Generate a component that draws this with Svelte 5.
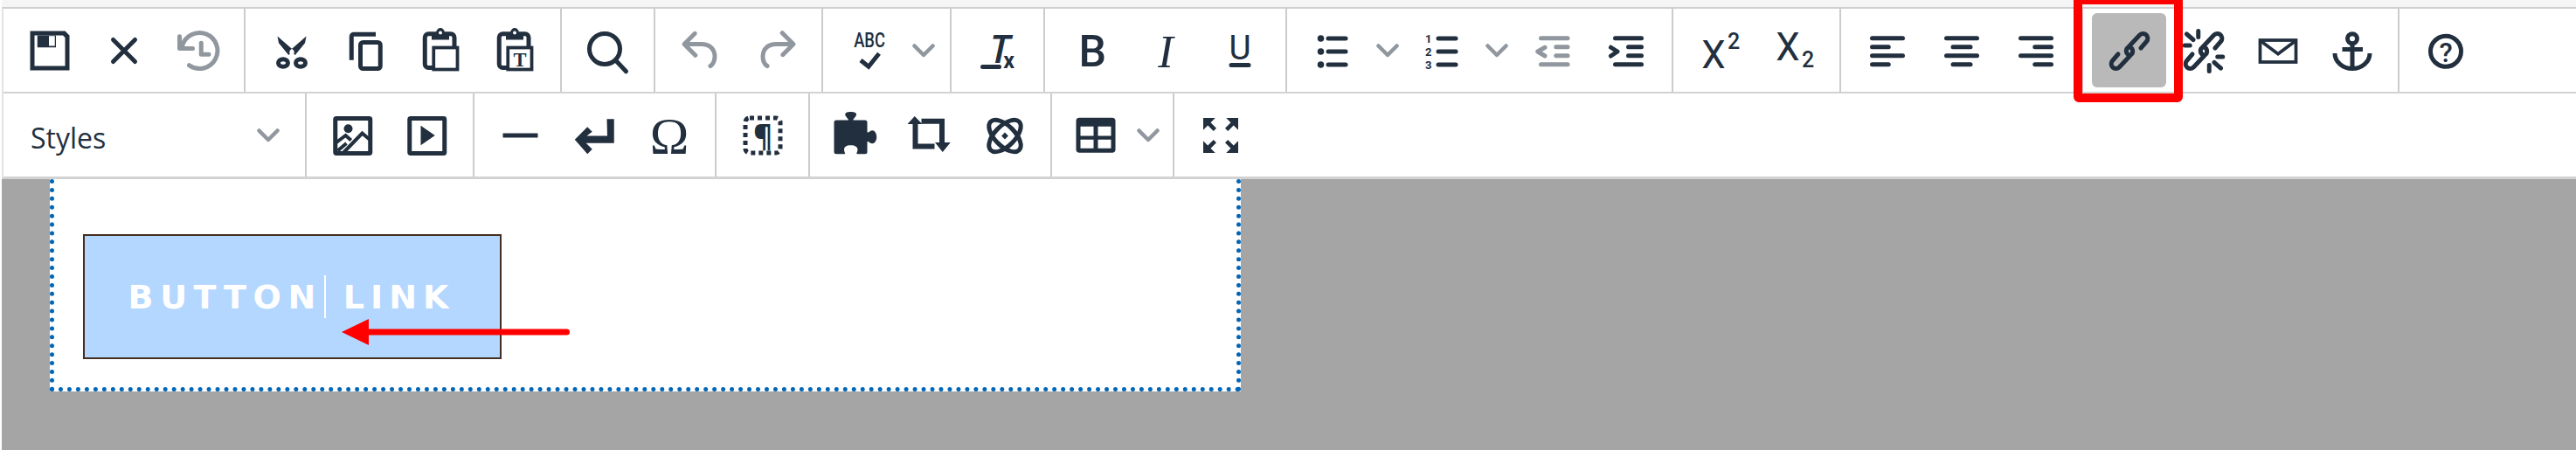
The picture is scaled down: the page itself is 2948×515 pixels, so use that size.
<script>
  const S = 'fill="none" stroke="currentColor" stroke-width="2"';
  const R = S + ' stroke-linecap="round" stroke-linejoin="round"';
  const F = 'fill="currentColor"';
  const T = F + ' font-family="Roboto, sans-serif" text-anchor="middle"';
  const linkPath = 'M17.2 10.800L19.800 7.800A2.100 2.100 0 0 0 16.600 4.900L10.700 11.200Q10 12.900 11.900 14.300';
  const chain = `<path ${R} d="${linkPath}"/><path ${R} transform="rotate(180 12 12.200)" d="${linkPath}"/>`;
  const clip = `<rect x="4.9" y="4.3" width="13.5" height="15.5" rx="1.6" ${S}/><path ${F} d="M8 3.6h2c.2-1.2 1-2 2-2s1.800.8 2 2h2V7H8z"/><circle cx="12" cy="3.8" r=".8" fill="#fff"/><rect x="8.900" y="10.600" width="10.900" height="10" fill="#fff" stroke="currentColor" stroke-width="1.500"/>`;
  const line = (x1, x2, y) => `<path ${R} d="M${x1} ${y}H${x2}"/>`;
  const corner = `<path ${F} d="M4 4h5.500L7.400 6.100 10 8.700 8.700 10 6.100 7.400 4 9.500z"/>`;

  const icons = {
    save: `<path ${F} fill-rule="evenodd" d="M3 3h16l2 2v16H3zM5 5v14h14V6l-1-1z"/><path ${F} d="M6.300 5h8.500v5.500H6.300z"/><path fill="#fff" d="M11.600 5.300h2.700v4.500h-2.700z"/>`,
    close: `<path ${R} stroke-width="2.200" d="M7 7l10 10M17 7L7 17"/>`,
    history: `<path ${R} d="M3.400 5.500V11h6"/><path ${R} d="M4.600 10A8.200 8.200 0 1 1 7.800 18.700"/><path ${R} d="M13.300 8.500v5.200h3.500"/>`,
    cut: `<path ${F} d="M5.400 5.400L6 8.500l4.500 5.500L13 12zM18.600 5.400L18 8.500 13.500 14 11 12z"/><circle cx="12" cy="12.800" r="1.100" fill="#fff"/><ellipse cx="8" cy="17.600" rx="2.200" ry="1.700" ${S} stroke-width="1.700"/><ellipse cx="16" cy="17.600" rx="2.200" ry="1.700" ${S} stroke-width="1.700"/>`,
    copy: `<path ${S} d="M5.300 16.300V5.500a1 1 0 0 1 1-1h10.100"/><rect x="9.400" y="8.200" width="9.100" height="12" rx="1.200" ${S}/>`,
    paste: clip,
    pastetext: clip + `<text x="14.400" y="19" font-family="Liberation Serif, serif" font-weight="700" font-size="9" text-anchor="middle" ${F}>T</text>`,
    search: `<circle cx="10.400" cy="11.200" r="7" ${S}/><path ${R} d="M15.500 16.500l4.700 5"/>`,
    undo: `<path ${F} d="M6.400 8H12c3.700 0 6.200 2 6.800 5.100.6 2.700-.4 5.600-2.300 6.800a1 1 0 0 1-1-1.800c1.100-.6 1.800-2.700 1.400-4.600-.5-2.100-2.100-3.500-4.900-3.500H6.400l3.300 3.300a1 1 0 1 1-1.400 1.400l-5-5a1 1 0 0 1 0-1.400l5-5a1 1 0 0 1 1.400 1.400L6.400 8z"/>`,
    redo: `<path ${F} d="M17.600 10H12c-2.800 0-4.400 1.400-4.900 3.500-.4 2 .3 4 1.400 4.600a1 1 0 1 1-1 1.800c-2-1.200-2.900-4.100-2.300-6.800.6-3 3-5.100 6.800-5.100h5.600l-3.300-3.300a1 1 0 1 1 1.400-1.400l5 5a1 1 0 0 1 0 1.400l-5 5a1 1 0 0 1-1.400-1.400l3.300-3.300z"/>`,
    spell: `<text x="12" y="10.500" textLength="14.300" lengthAdjust="spacingAndGlyphs" font-size="9.500" font-weight="500" ${T}>ABC</text><path ${S} d="M8 16.400l3.600 2.900 4.800-6"/>`,
    clear: `<text x="12.800" y="17.600" font-family="Open Sans, sans-serif" font-style="italic" font-weight="600" font-size="18" text-anchor="middle" ${F}>T</text><rect x="4" y="18.400" width="9.600" height="2" rx="1" ${F}/><text x="17" y="20" font-size="10" font-weight="700" ${T}>x</text>`,
    bold: `<text x="12.500" y="19" font-size="20" font-weight="500" ${T}>B</text>`,
    italic: `<text x="12" y="19.500" font-family="Liberation Serif, serif" font-style="italic" font-size="21" text-anchor="middle" ${F}>I</text>`,
    underline: `<text x="12" y="16" font-size="15.500" ${T}>U</text><rect x="7" y="17.600" width="10" height="2" rx="1" ${F}/>`,
    bullist: [6.4, 12.4, 18.4].map((y) => `<circle cx="6.200" cy="${y}" r="1.500" ${F}/>` + line(9.6, 17.6, y)).join(''),
    numlist: ['1', '2', '3'].map((n, i) => `<text x="5.500" y="${8.2 + i * 6}" font-size="5.200" font-weight="700" ${T}>${n}</text>` + line(10, 18, 6.4 + i * 6)).join(''),
    outdent: line(7, 19.200, 6.300) + line(13.900, 19.200, 10.300) + line(13.900, 19.200, 14.300) + line(7, 19.200, 18.300) + `<path ${R} d="M8.800 10.500L5.500 12.400l3.300 2"/>`,
    indent: line(7, 19, 6.300) + line(13, 19, 10.300) + line(13, 19, 14.300) + line(7, 19, 18.300) + `<path ${R} d="M5 10.500l3 1.900-3 2"/>`,
    sup: `<text x="9.200" y="20" font-size="17.500" ${T}>X</text><text x="18.400" y="11" font-size="10" font-weight="500" ${T}>2</text>`,
    sub: `<text x="9.200" y="16.400" font-size="17.500" ${T}>X</text><text x="18.400" y="19.600" font-size="10" font-weight="500" ${T}>2</text>`,
    alignleft: line(5, 19, 6.300) + line(5, 12.500, 10.300) + line(5, 19, 14.300) + line(5, 12.500, 18.300),
    aligncenter: line(5, 19, 6.300) + line(8, 16, 10.300) + line(5, 19, 14.300) + line(8, 16, 18.300),
    alignright: line(5, 19, 6.300) + line(11.500, 19, 10.300) + line(5, 19, 14.300) + line(11.500, 19, 18.300),
    link: chain,
    unlink: chain + `<path ${R} stroke-width="1.600" d="M4.200 4.400l3 2.600M9.500 3v2.800M3.300 9.600h2.400M19.800 20l-3-2.600M14.500 21.400v-2.800M20.700 14.800h-2.400"/>`,
    mail: `<rect x="3.800" y="7.200" width="16.400" height="10" fill="none" stroke="currentColor" stroke-width="1.500"/><path fill="none" stroke="currentColor" stroke-width="1.500" d="M4 7.500l8 6 8-6"/>`,
    anchor: `<circle cx="12" cy="6.500" r="2.200" ${S}/><path ${S} d="M12 9v11M7.400 11.400h9.400M4 13.200A8 7 0 0 0 20 13.200"/>`,
    help: `<circle cx="12" cy="12.300" r="7" ${S}/><text x="12" y="17.100" font-size="12.500" font-weight="500" ${T}>?</text>`,
    image: `<rect x="3.900" y="4.200" width="16" height="16" rx=".5" ${S}/><circle cx="9.800" cy="8.900" r="2" ${F}/><path fill="none" stroke="currentColor" stroke-width="1.600" d="M4 15.500L8.600 12l2.500 2.200M7.500 20l8.700-9 3.800 3.200M5 19l4-3.400"/>`,
    media: `<rect x="3.900" y="4.200" width="16" height="16" rx=".5" ${S}/><path ${F} d="M9 7.500l6.500 4.500L9 16.500z"/>`,
    hr: `<path ${F} d="M3.800 11h16v2h-16z"/>`,
    nbsp: `<path ${F} d="M17.400 4.500h3.300v11H7.900l2.800 2.800-2.200 2.200-5.800-6.600 5.800-5.800 2.200 2.200-2.500 1.900h9.400z"/>`,
    omega: `<text x="12" y="20.500" font-family="Liberation Serif, serif" font-size="24" text-anchor="middle" ${F}>Ω</text>`,
    blocks: `<rect x="4" y="4" width="16" height="16" rx="2" ${S} stroke-dasharray="2 1.600"/><text x="12" y="17" font-family="Open Sans, sans-serif" font-weight="700" font-size="13.500" text-anchor="middle" ${F}>¶</text>`,
    puzzle: `<path ${F} d="M2.800 5h5.500c.3-.7-1.400-1.500-1.400-2.600C6.900 1.500 8 1.200 9.400 1.200s2.600.3 2.600 1.200c0 1.100-1.600 1.900-1.400 2.600H16a1 1 0 0 1 1 1v4.600c.7.2 1.300-.9 2.400-.9.900 0 1.900 1.200 1.900 3s-1 3-1.900 3c-1.100 0-1.700-1.100-2.400-.9v4.700a1 1 0 0 1-1 1h-3.800c-.2-.7.400-1 .4-2 0-1.200-1.200-2-3.200-2s-3 .8-3 2c0 1 .5 1.300.4 2H2.800a1 1 0 0 1-1-1V6a1 1 0 0 1 1-1z"/>`,
    crop: `<path fill="none" stroke="currentColor" stroke-width="2.400" d="M5 6v11h8.800M7.800 5.500H17.200v10"/><path ${F} d="M4.700 3.200l3.500 3.600H1.400zM17.500 19.600L14 15.200h7.100z"/>`,
    atom: `<ellipse cx="12" cy="12.200" rx="9.200" ry="4.600" transform="rotate(45 12 12.200)" ${S}/><ellipse cx="12" cy="12.200" rx="9.200" ry="4.600" transform="rotate(-45 12 12.200)" ${S}/><rect x="10.900" y="11.100" width="2.200" height="2.200" transform="rotate(45 12 12.200)" ${F}/>`,
    table: `<path ${F} fill-rule="evenodd" d="M4.500 3.900h15A1.500 1.500 0 0 1 21 5.400v13a1.500 1.500 0 0 1-1.500 1.500h-15A1.500 1.500 0 0 1 3 18.400v-13a1.500 1.500 0 0 1 1.500-1.500zM5 7.900v4.300h6V7.900zM13 7.900v4.300h6V7.900zM5 13.900v4h6v-4zM13 13.900v4h6v-4z"/>`,
    full: corner + `<g transform="rotate(90 12 12)">${corner}</g><g transform="rotate(180 12 12)">${corner}</g><g transform="rotate(270 12 12)">${corner}</g>`
  };

  const off = true;
  const row1 = [
    [{ i: 'save' }, { i: 'close' }, { i: 'history', off }],
    [{ i: 'cut' }, { i: 'copy' }, { i: 'paste' }, { i: 'pastetext' }],
    [{ i: 'search' }],
    [{ i: 'undo', off }, { i: 'redo', off }],
    [{ i: 'spell', drop: true }],
    [{ i: 'clear' }],
    [{ i: 'bold' }, { i: 'italic' }, { i: 'underline' }],
    [{ i: 'bullist', drop: true }, { i: 'numlist', drop: true }, { i: 'outdent', off }, { i: 'indent' }],
    [{ i: 'sup' }, { i: 'sub' }],
    [{ i: 'alignleft' }, { i: 'aligncenter' }, { i: 'alignright' }],
    [{ i: 'link', active: true }, { i: 'unlink' }, { i: 'mail' }, { i: 'anchor' }],
    [{ i: 'help' }]
  ];
  const row2 = [
    [{ i: 'image' }, { i: 'media' }],
    [{ i: 'hr' }, { i: 'nbsp' }, { i: 'omega' }],
    [{ i: 'blocks' }],
    [{ i: 'puzzle' }, { i: 'crop' }, { i: 'atom' }],
    [{ i: 'table', drop: true, tight: true }],
    [{ i: 'full' }]
  ];
</script>

{#snippet chevron()}
  <svg class="chev" viewBox="0 0 26 16" width="26" height="16" aria-hidden="true">
    <path d="M2.500 2.500L13 13 23.500 2.500" fill="none" stroke="currentColor" stroke-width="4.500" stroke-linecap="round" stroke-linejoin="round" />
  </svg>
{/snippet}

{#snippet group(items)}
  <div class="group" class:tight={items[0].tight}>
    {#each items as b}
      <button class="btn" class:off={b.off} class:active={b.active} type="button">
        <svg viewBox="0 0 24 24" width="60" height="60" aria-hidden="true">{@html icons[b.i]}</svg>
      </button>
      {#if b.drop}
        <button class="caret" class:narrow={b.tight} type="button">{@render chevron()}</button>
      {/if}
    {/each}
  </div>
{/snippet}

<div class="page">
  <div class="topstrip"></div>
  <header class="toolbar">
    <div class="row">
      {#each row1 as items}{@render group(items)}{/each}
    </div>
    <div class="row second">
      <div class="select">
        <span class="label">Styles</span>
        {@render chevron()}
      </div>
      {#each row2 as items}{@render group(items)}{/each}
    </div>
  </header>

  <main class="stage">
    <section class="sheet">
      <a class="cta" href="#link">
        <span class="word">BUTTON</span>
        <span class="bar"></span>
        <span class="word last">LINK</span>
      </a>
    </section>
  </main>

  <div class="frame"></div>
  <svg class="arrow" viewBox="0 0 262 32" width="262" height="32" aria-hidden="true">
    <path d="M0 16L31 1v11.500h226.500a3.500 3.500 0 0 1 0 7H31V31z" fill="#ff0000" />
  </svg>
</div>

<style>
  :global(body) {
    margin: 0;
    background: #a5a5a5;
  }
  .page {
    position: relative;
    width: 2948px;
    height: 515px;
    overflow: hidden;
    background: #a5a5a5;
    box-shadow: inset 2px 0 0 #fff;
    color: #222f3e;
    font-family: "Open Sans", sans-serif;
  }
  .topstrip {
    height: 8px;
    margin-left: 2px;
    background: #f5f5f5;
  }
  .toolbar {
    margin-left: 2px;
    background: #fff;
    border-top: 2px solid #cfcfcf;
    border-left: 2px solid #e2e2e2;
    border-bottom: 3px solid #d2d2d2;
  }
  .row {
    display: flex;
    height: 95px;
    border-bottom: 2px solid #d2d2d2;
  }
  .row.second {
    border-bottom: 0;
  }
  .group {
    display: flex;
    align-items: center;
    padding: 0 10px;
    border-right: 2px solid #ccc;
  }
  .group:last-child {
    border-right: 0;
  }
  .group.tight {
    padding-left: 7px;
  }
  .btn,
  .caret {
    display: flex;
    align-items: center;
    justify-content: center;
    height: 85px;
    padding: 0;
    border: 0;
    border-radius: 6px;
    background: transparent;
    color: #222f3e;
  }
  .btn {
    width: 85px;
  }
  .btn svg {
    flex: none;
  }
  .btn.off {
    color: #91979e;
  }
  .btn.active {
    background: #b9b9b9;
  }
  .caret {
    width: 40px;
    color: #91979e;
  }
  .caret.narrow {
    width: 36px;
  }
  .select {
    display: flex;
    align-items: center;
    justify-content: space-between;
    box-sizing: border-box;
    width: 347px;
    padding: 0 29px 0 31px;
    border-right: 2px solid #ccc;
    font-size: 32px;
    color: #222f3e;
  }
  .label {
    padding-top: 5px;
  }
  .select .chev {
    color: #91979e;
  }
  .stage {
    padding-left: 57px;
  }
  .sheet {
    box-sizing: border-box;
    width: 1363px;
    height: 243px;
    padding: 63px 0 0 33px;
    background: #fff;
    border: 5px dotted #0066b8;
    border-top: 0;
  }
  .cta {
    box-sizing: border-box;
    display: flex;
    align-items: center;
    justify-content: center;
    width: 479px;
    height: 143px;
    padding-right: 2px;
    background: #b3d7ff;
    border: 2px solid #432e22;
    color: #fff;
    text-decoration: none;
    font-family: "DejaVu Sans", sans-serif;
    font-weight: 700;
    font-size: 38px;
    line-height: 1;
    letter-spacing: 7.600px;
  }
  .word.last {
    letter-spacing: 7px;
  }
  .bar {
    width: 2px;
    height: 49px;
    margin: 0 20px 0 2px;
    background: #fff;
  }
  .frame {
    position: absolute;
    left: 2373px;
    top: -5px;
    width: 125px;
    height: 122px;
    box-sizing: border-box;
    border: 10px solid #f00;
    border-radius: 6px;
  }
  .arrow {
    position: absolute;
    left: 391px;
    top: 364px;
  }
</style>
